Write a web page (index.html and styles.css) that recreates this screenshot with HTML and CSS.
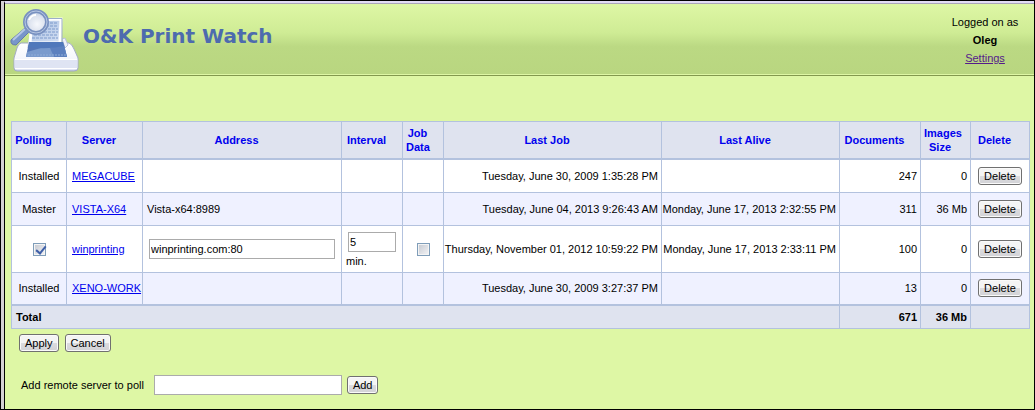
FILE: index.html
```
<!DOCTYPE html>
<html lang="en">
  <head>
    <meta charset="UTF-8" />
    <meta name="viewport" content="width=device-width, initial-scale=1.0" />
    <title>O&amp;K Print Watch</title>
    <link rel="stylesheet" href="styles.css">
  </head>
  <body>
    <div class="page">
      <header>
        <svg class="logo" viewBox="0 0 70 66" aria-hidden="true">
          <defs>
            <linearGradient id="base" x1="0" y1="0" x2="0" y2="1">
              <stop offset="0" stop-color="#ffffff" />
              <stop offset="0.6" stop-color="#f4f6fc" />
              <stop offset="1" stop-color="#c5cde6" />
            </linearGradient>
            <linearGradient id="sheet" x1="0" y1="0" x2="1" y2="1">
              <stop offset="0" stop-color="#a9bfe2" />
              <stop offset="1" stop-color="#d4e0f3" />
            </linearGradient>
            <radialGradient id="glass" cx="0.55" cy="0.6" r="0.6">
              <stop offset="0" stop-color="#f6f8fc" />
              <stop offset="0.6" stop-color="#dde3ef" />
              <stop offset="1" stop-color="#b9c8e2" />
            </radialGradient>
          </defs>
          <!-- printer body -->
          <path d="M11 35H59Q62 36 64 41L68 50V60Q68 63 64 63H7Q4 63 4 60V50L7 40Q8 36 11 35Z" fill="url(#base)" stroke="#a3abc6" />
          <path d="M4.500 51H67.500V60Q67 62 64 62H7Q5 62 4.500 60Z" fill="#dfe4f3" />
          <path d="M5 51.500H67M5 60.500H67" stroke="#fff" />
          <path d="M19 31L22 30V37L18 40ZM52 31L55 30L58 37L55 40Z" fill="#eef1f9" stroke="#b9c2da" />
          <!-- paper -->
          <path d="M22 12L51 11L50 35H20Z" fill="url(#sheet)" stroke="#fff" stroke-width="3" />
          <path d="M20 10.500H52V34" fill="none" stroke="#9cadca" />
          <path d="M36 15H48M36 18H48M34 21H48M30 24H48M24 27H48M22 30H48" stroke="#7d9acb" stroke-dasharray="3 1" />
          <path d="M19 34H53L57 49H16Z" fill="#5577b7" />
          <path d="M17 44L38 38L54 37L57 49H16Z" fill="#799acd" />
          <path d="M40 40L54 37L57 49H44Z" fill="#5c80bf" />
          <path d="M20 34H53L54 38Q36 42 18 39Z" fill="#5078bb" />
          <path d="M18 47H56" stroke="#91add8" stroke-dasharray="2 1" />
          <!-- magnifier -->
          <path d="M1 32L15 20L19 24L6 37Q0 37 1 32Z" fill="#7896ca" stroke="#6578aa" />
          <path d="M3 32L15 21" stroke="#b4c7e6" stroke-width="2" />
          <circle cx="26" cy="14" r="11" fill="url(#glass)" stroke="#7991c0" stroke-width="4" />
          <circle cx="26" cy="14" r="11" fill="none" stroke="#b7c7e3" />
          <path d="M19 12Q21 7 26 7" fill="none" stroke="#fff" stroke-width="2" />
        </svg>
        <h1>O&amp;K Print Watch</h1>
        <div class="user">
          <span>Logged on as</span>
          <strong>Oleg</strong>
          <a href="#">Settings</a>
        </div>
      </header>
      <main>
        <form class="servers">
          <table>
            <colgroup>
              <col class="polling">
              <col class="server">
              <col>
              <col class="interval">
              <col class="jobdata">
              <col class="lastjob">
              <col class="lastalive">
              <col class="documents">
              <col class="images">
              <col class="delete">
            </colgroup>
            <thead>
              <tr>
                <th>Polling</th>
                <th>Server</th>
                <th>Address</th>
                <th>Interval</th>
                <th>Job Data</th>
                <th>Last Job</th>
                <th>Last Alive</th>
                <th>Documents</th>
                <th>Images Size</th>
                <th>Delete</th>
              </tr>
            </thead>
            <tbody>
              <tr>
                <td class="center">Installed</td>
                <td class="name"><a href="#">MEGACUBE</a></td>
                <td></td>
                <td></td>
                <td></td>
                <td class="right">Tuesday, June 30, 2009 1:35:28 PM</td>
                <td></td>
                <td class="right">247</td>
                <td class="right">0</td>
                <td class="center"><button type="button">Delete</button></td>
              </tr>
              <tr>
                <td class="center">Master</td>
                <td class="name"><a href="#">VISTA-X64</a></td>
                <td>Vista-x64:8989</td>
                <td></td>
                <td></td>
                <td class="right">Tuesday, June 04, 2013 9:26:43 AM</td>
                <td class="right">Monday, June 17, 2013 2:32:55 PM</td>
                <td class="right">311</td>
                <td class="right">36 Mb</td>
                <td class="center"><button type="button">Delete</button></td>
              </tr>
              <tr>
                <td class="center"><input type="checkbox" aria-label="Polling" checked></td>
                <td class="name"><a href="#">winprinting</a></td>
                <td class="field"><input type="text" aria-label="Address" value="winprinting.com:80"></td>
                <td><input class="minutes" type="text" id="minutes" value="5"><label for="minutes">min.</label></td>
                <td class="center"><input type="checkbox" aria-label="Job Data"></td>
                <td class="right">Thursday, November 01, 2012 10:59:22 PM</td>
                <td class="right">Monday, June 17, 2013 2:33:11 PM</td>
                <td class="right">100</td>
                <td class="right">0</td>
                <td class="center"><button type="button">Delete</button></td>
              </tr>
              <tr>
                <td class="center">Installed</td>
                <td class="name"><a href="#">XENO-WORK</a></td>
                <td></td>
                <td></td>
                <td></td>
                <td class="right">Tuesday, June 30, 2009 3:27:37 PM</td>
                <td></td>
                <td class="right">13</td>
                <td class="right">0</td>
                <td class="center"><button type="button">Delete</button></td>
              </tr>
            </tbody>
            <tfoot>
              <tr>
                <td colspan="7">Total</td>
                <td class="right">671</td>
                <td class="right">36 Mb</td>
                <td></td>
              </tr>
            </tfoot>
          </table>
          <div class="actions">
            <button type="submit">Apply</button>
            <button type="reset">Cancel</button>
          </div>
        </form>
        <form class="add">
          <label for="remote">Add remote server to poll</label>
          <input type="text" id="remote">
          <button type="submit">Add</button>
        </form>
      </main>
    </div>
  </body>
</html>
```
FILE: styles.css
```
* {
  box-sizing: border-box;
}

body {
  margin: 0;
  min-height: 100vh;
  display: flex;
  background-color: #d4d0d4;
  border: 1px solid black;
  font-family: "Liberation Sans", Arial, sans-serif;
  font-size: 11px;
  line-height: 14px;
  color: black;
}

.page {
  flex: 1;
  margin-left: 3px;
  border-left: 1px solid black;
  border-top: 2px solid #e2dcf4;
  background-color: #def7a5;
}

header {
  display: flex;
  align-items: flex-start;
  height: 73px;
  padding-left: 5px;
  border-top: 1px solid #aaa6b8;
  border-bottom: 1px solid #83994f;
  background: linear-gradient(#def7a5, #cfec95 40%, #bbd983 60%, #b9d680);
  box-shadow: inset 0 -1px #def7a5;
}

.logo {
  width: 70px;
  height: 66px;
  margin-top: 4px;
}

h1 {
  margin: 20px 0 0 3px;
  font-family: "DejaVu Sans", Verdana, sans-serif;
  font-size: 20px;
  line-height: 24px;
  color: #4d6bae;
}

.user {
  display: flex;
  flex-direction: column;
  gap: 4px;
  width: 98px;
  margin-left: auto;
  padding-top: 11px;
  text-align: center;
}

a {
  color: #0000ee;
}

.user a {
  color: #551a8b;
}

main {
  padding: 45px 4px 0 6px;
}

table {
  width: 100%;
  table-layout: fixed;
  border-collapse: collapse;
}

.polling {
  width: 55px;
}

.server {
  width: 76px;
}

.interval {
  width: 61px;
}

.jobdata {
  width: 41px;
}

.lastjob {
  width: 218px;
}

.lastalive {
  width: 178px;
}

.documents {
  width: 81px;
}

.images {
  width: 50px;
}

.delete {
  width: 59px;
}

th,
td {
  border: 1px solid #b3c2de;
  padding: 4px;
  text-align: left;
}

td {
  white-space: nowrap;
}

th {
  height: 37px;
  padding: 4px 14px 4px 3px;
  text-align: center;
  color: #0000ee;
}

thead,
tfoot {
  background-color: #dfe3ef;
}

tbody {
  border-top: 2px solid #b3c2de;
  border-bottom: 2px solid #b3c2de;
}

tbody tr {
  height: 33px;
  background-color: white;
}

tbody tr:nth-child(even) {
  background-color: #eff1ff;
}

tfoot td {
  font-weight: bold;
}

.center {
  text-align: center;
}

.right {
  padding-left: 0;
  padding-right: 3px;
  text-align: right;
}

.name {
  padding-left: 5px;
  padding-right: 0;
}

.field {
  padding: 4px 6px;
}

input,
button {
  font: inherit;
  color: black;
}

input[type="text"] {
  display: block;
  width: 188px;
  height: 20px;
  padding: 0 1px;
  border: 1px solid #ababab;
  background-color: white;
}

.field input[type="text"] {
  width: 100%;
}

input.minutes[type="text"] {
  width: 48px;
  margin: 2px 2px;
}

input[type="checkbox"] {
  appearance: none;
  width: 13px;
  height: 13px;
  margin: 0;
  border: 1px solid #7f9db9;
  background: linear-gradient(135deg, #c4c8d0, #f4f4f6);
  box-shadow: inset 0 0 0 1px #f4f4f4;
  vertical-align: middle;
}

/* tick mark */
input[type="checkbox"]:checked::before {
  content: "";
  display: block;
  width: 4px;
  height: 8px;
  margin: 0 0 0 4px;
  border: solid #3e5fa8;
  border-width: 0 2px 2px 0;
  transform: rotate(40deg);
}

button {
  height: 18px;
  padding: 0 5px;
  border: 1px solid #707070;
  border-radius: 3px;
  background: linear-gradient(#f4f4f4 50%, #dcdcdf 50%, #d2d2d6);
  box-shadow: inset 0 0 0 1px #fafafa;
  line-height: 14px;
}

.actions {
  display: flex;
  gap: 6px;
  padding: 5px 8px;
}

.add {
  display: flex;
  align-items: center;
  gap: 5px;
  padding: 18px 10px 8px;
}

.add label {
  margin-right: 5px;
}
```
